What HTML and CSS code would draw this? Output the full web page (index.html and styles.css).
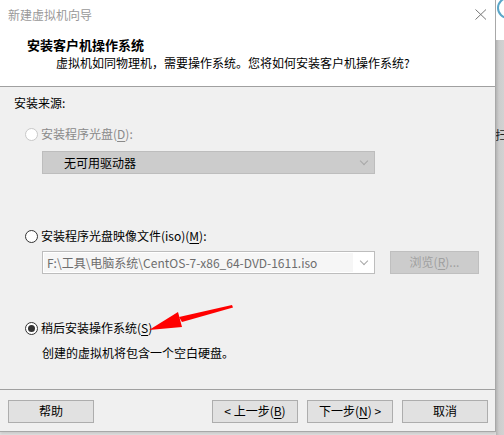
FILE: index.html
```html
<!DOCTYPE html>
<html lang="zh-CN">
<head>
    <meta charset="UTF-8">
    <title>新建虚拟机向导</title>
    <link rel="stylesheet" href="styles.css">
</head>
<body>
    <div class="screen">
        <div class="dialog">
            <div class="top">
                <div class="titlebar">
                    <span class="titlebar-text">新建虚拟机向导</span>
                    <svg class="close" width="12" height="11" viewBox="0 0 12 11">
                        <path d="M0.5 0.5 L11 10.5 M11 0.5 L0.5 10.5" stroke="#777" stroke-width="1" fill="none"/>
                    </svg>
                </div>
                <div class="header">
                    <div class="header-title">安装客户机操作系统</div>
                    <div class="header-sub">虚拟机如同物理机，需要操作系统。您将如何安装客户机操作系统?</div>
                </div>
            </div>

            <div class="content">
                <div class="section-label">安装来源:</div>

                <div class="radio disabled radio-first">
                    <span class="radio-dot"></span>
                    <span>安装程序光盘(<u>D</u>):</span>
                </div>
                <div class="combo combo-disabled">
                    <span class="combo-text">无可用驱动器</span>
                    <span class="chevron"></span>
                </div>

                <div class="radio radio-second">
                    <span class="radio-dot"></span>
                    <span>安装程序光盘映像文件(iso)(<u>M</u>):</span>
                </div>
                <div class="file-row">
                    <div class="combo combo-file">
                        <span class="combo-text">F:\工具\电脑系统\CentOS-7-x86_64-DVD-1611.iso</span>
                        <span class="chevron"></span>
                    </div>
                    <div class="btn btn-disabled browse">浏览(<u>R</u>)...</div>
                </div>

                <div class="radio radio-third">
                    <span class="radio-dot checked"></span>
                    <span>稍后安装操作系统(<u>S</u>)</span>
                </div>
                <div class="note">创建的虚拟机将包含一个空白硬盘。</div>
            </div>

            <div class="footer">
                <div class="btn">帮助</div>
                <div class="spacer"></div>
                <div class="btn">&lt; 上一步(<u>B</u>)</div>
                <div class="btn">下一步(<u>N</u>) &gt;</div>
                <div class="btn">取消</div>
            </div>
        </div>

        <div class="side">
            <div class="side-top">
                <svg width="8" height="22" viewBox="0 0 8 22">
                    <circle cx="12" cy="8" r="10" stroke="#5aa6c8" stroke-width="2" fill="none"/>
                </svg>
            </div>
            <div class="side-rest">
                <span class="side-char">扫</span>
            </div>
        </div>

        <!-- red arrow drawn over the dialog -->
        <svg class="arrow" width="504" height="435" viewBox="0 0 504 435">
            <polygon points="232,305 233,307.5 182,322 179,317" fill="#ff0000"/>
            <polygon points="149,330 178,312 182,327" fill="#ff0000"/>
        </svg>
    </div>
</body>
</html>
```

FILE: styles.css
```css
body {
    margin: 0;
    background-color: #e4e4e4;
    font-family: "Noto Sans CJK SC", "Noto Sans", sans-serif;
    font-size: 12px;
    color: #000;
}

.screen {
    position: relative;
    display: flex;
    width: 504px;
    height: 435px;
    overflow: hidden;
}

.dialog {
    width: 496px;
    height: 432px;
    flex-shrink: 0;
    display: flex;
    flex-direction: column;
    background-color: #f0f0f0;
    border-right: 1px solid #a8a8a8;
    border-bottom: 1px solid #a8a8a8;
    box-sizing: border-box;
    box-shadow: 0 2px 3px rgba(0,0,0,0.12);
}

.top {
    background-color: #fff;
    border-bottom: 1px solid #a0a0a0;
    height: 87px;
    box-sizing: border-box;
}

.titlebar {
    height: 29px;
    display: flex;
    align-items: center;
    justify-content: space-between;
    padding: 0 8px 0 8px;
}

.titlebar-text {
    color: #999;
    line-height: 29px;
}

.close {
    margin-right: 0;
    margin-top: 0;
}

.header {
    padding-top: 7px;
}

.header-title {
    font-weight: bold;
    font-size: 13px;
    line-height: 18px;
    padding-left: 27px;
}

.header-sub {
    line-height: 18px;
    padding-left: 56px;
}

.content {
    height: 303px;
    padding: 7px 0 0 14px;
    box-sizing: border-box;
    border-bottom: 1px solid #a0a0a0;
}

.section-label {
    line-height: 18px;
}

.radio {
    display: flex;
    align-items: center;
    gap: 3px;
    line-height: 18px;
    margin-left: 11px;
}

.radio-first {
    margin-top: 13px;
}

.radio-second {
    margin-top: 53px;
}

.radio-third {
    margin-top: 45px;
}

.radio-dot {
    width: 13px;
    height: 13px;
    border: 1px solid #333;
    border-radius: 50%;
    background-color: #fff;
    box-sizing: border-box;
    position: relative;
}

.radio-dot.checked::after {
    content: "";
    position: absolute;
    left: 2px;
    top: 2px;
    width: 7px;
    height: 7px;
    border-radius: 50%;
    background-color: #333;
}

.radio.disabled {
    color: #8a8a8a;
}

.radio.disabled .radio-dot {
    border-color: #c8c8c8;
}

u {
    text-underline-offset: 2px;
}

.combo {
    width: 333px;
    height: 23px;
    margin-left: 28px;
    border: 1px solid #bdbdbd;
    box-sizing: border-box;
    display: flex;
    align-items: center;
    position: relative;
}

.combo-disabled {
    margin-top: 8px;
    background-color: #cccccc;
}

.combo-disabled .combo-text {
    padding-left: 21px;
}

.combo-file {
    background-color: #fff;
    color: #6d6d6d;
}

.combo-file .combo-text {
    background-color: #f6f6f6;
    width: 309px;
    height: 19px;
    line-height: 19px;
    margin-left: 1px;
    padding-left: 3px;
    box-sizing: border-box;
    white-space: nowrap;
    overflow: hidden;
}

.chevron {
    position: absolute;
    right: 7px;
    top: 6px;
    width: 5px;
    height: 5px;
    border-right: 1px solid #a8a8a8;
    border-bottom: 1px solid #a8a8a8;
    transform: rotate(45deg);
}

.file-row {
    display: flex;
    align-items: center;
    margin-top: 6px;
}

.btn {
    width: 86px;
    height: 22px;
    line-height: 20px;
    text-align: center;
    background-color: #e1e1e1;
    border: 1px solid #adadad;
    box-sizing: border-box;
}

.btn-disabled {
    background-color: #cccccc;
    border-color: #bfbfbf;
    color: #a0a0a0;
}

.browse {
    width: 89px;
    height: 23px;
    margin-left: 15px;
}

.note {
    line-height: 18px;
    margin: 7px 0 0 28px;
}

.footer {
    flex: 1;
    display: flex;
    align-items: flex-start;
    gap: 9px;
    padding: 10px 7px 0 8px;
}

.footer .btn {
    height: 23px;
}

.spacer {
    flex: 1;
}

.side {
    width: 8px;
    display: flex;
    flex-direction: column;
}

.side-top {
    height: 40px;
    background-color: #fff;
}

.side-rest {
    flex: 1;
    background: linear-gradient(to right, #b4b4b4, #cdcdcd 3px, #d2d2d2);
    overflow: hidden;
    position: relative;
}

.side-char {
    position: absolute;
    left: -1px;
    top: 86px;
    font-size: 12px;
    color: #222;
}

.arrow {
    position: absolute;
    left: 0;
    top: 0;
    pointer-events: none;
}
```
